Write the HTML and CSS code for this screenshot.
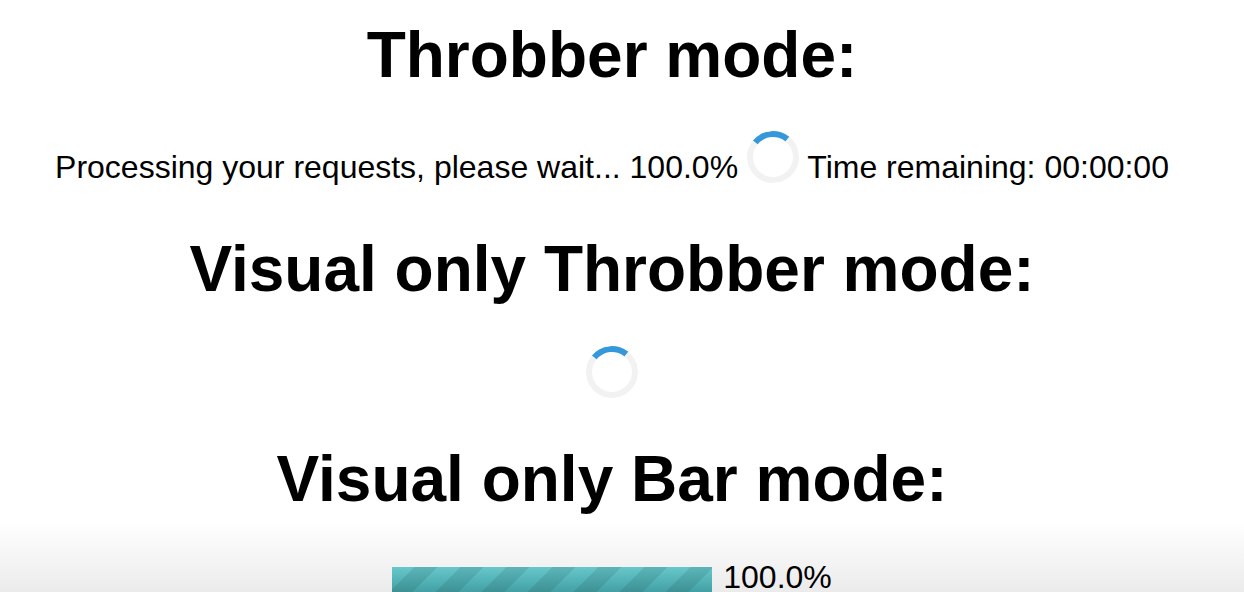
FILE: index.html
```html
<!DOCTYPE html>
<html lang="en">
<head>
<meta charset="utf-8">
<title>Progress modes</title>
<link rel="stylesheet" href="styles.css">
</head>
<body>
<div class="page">
  <h1 class="title first">Throbber mode:</h1>
  <p class="status">Processing your requests, please wait... 100.0% <span class="spinner inline"></span> Time remaining: 00:00:00</p>
  <h1 class="title second">Visual only Throbber mode:</h1>
  <div class="spinner solo"></div>
  <h1 class="title third">Visual only Bar mode:</h1>
  <div class="barrow">
    <div class="bar"></div>
    <span class="pct">100.0%</span>
  </div>
</div>
</body>
</html>
```

FILE: styles.css
```css
html {
  height: 100%;
  overflow: hidden;
  background: linear-gradient(to bottom, #ffffff 0, #ffffff 522px, #ebebeb 592px);
}
body {
  margin: 0;
  height: 100%;
  overflow: hidden;
  font-family: "Liberation Sans", Arial, Helvetica, sans-serif;
  color: #000;
}
.page {
  width: 1224px;
  padding-top: 18px;
  text-align: center;
}
.title {
  margin: 0;
  font-size: 64px;
  line-height: 74px;
  font-weight: bold;
}
.second { margin-top: 46px; }
.third { margin-top: 44px; }
.status {
  margin: 39px 0 0;
  font-size: 32px;
  line-height: 37px;
  white-space: nowrap;
}
.spinner {
  box-sizing: border-box;
  width: 52px;
  height: 52px;
  border: 6px solid #f2f2f2;
  border-top-color: #3498db;
  border-radius: 50%;
  transform: rotate(-6deg);
}
.spinner.inline {
  display: inline-block;
  vertical-align: -5px;
}
.spinner.solo {
  margin: 40px auto 0;
}
.barrow {
  margin-top: 43px;
  display: flex;
  justify-content: center;
  align-items: flex-start;
  gap: 11px;
  font-size: 32px;
  line-height: 37px;
}
.bar {
  width: 320px;
  height: 32px;
  margin-top: 8px;
  background:
    repeating-linear-gradient(135deg, rgba(0,0,0,0) 0, rgba(0,0,0,0) 16px, rgba(0,0,0,0.09) 16px, rgba(0,0,0,0.09) 32.5px),
    linear-gradient(to bottom, #67c7cb 0, #4fafb3 50%, #3a9397 100%);
}
```
